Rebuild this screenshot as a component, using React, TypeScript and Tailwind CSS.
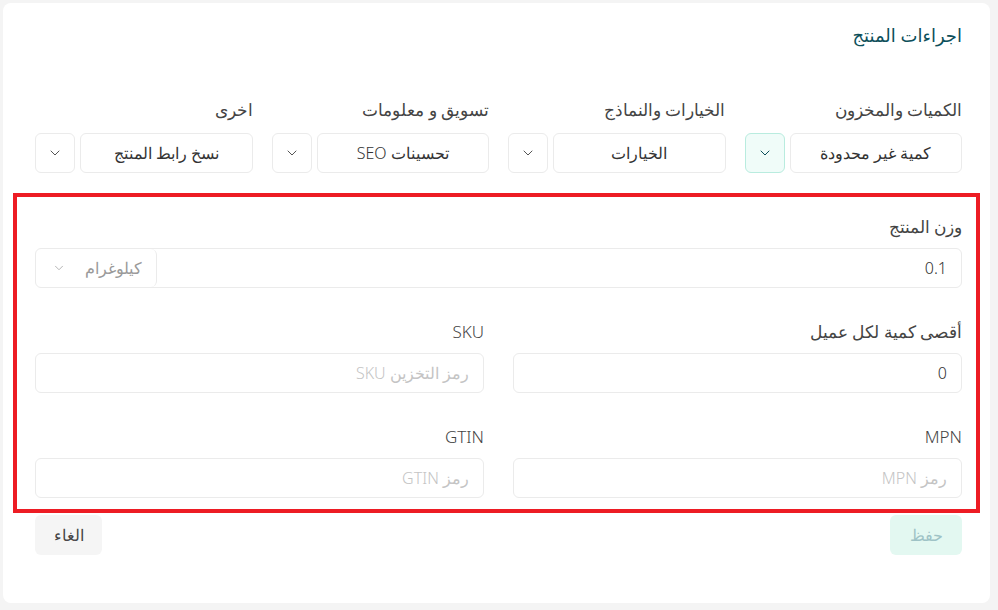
import { ChevronDown } from "lucide-react";

const groups = [
  { label: "الكميات والمخزون", value: "كمية غير محدودة", active: true },
  { label: "الخيارات والنماذج", value: "الخيارات", active: false },
  { label: "تسويق و معلومات", value: "تحسينات SEO", active: false },
  { label: "اخرى", value: "نسخ رابط المنتج", active: false },
];

function Field({ label, value, placeholder }: { label: string; value?: string; placeholder?: string }) {
  return (
    <div className="flex flex-col">
      <label className="h-6 mb-[9px] text-[17px] leading-6 text-[#444]">{label}</label>
      <div className="h-10 border border-[#ebebeb] rounded-md flex items-center px-[14px] text-[16px]">
        {value ? <span className="text-[#333]">{value}</span> : <span className="text-[#c4c4c4]">{placeholder}</span>}
      </div>
    </div>
  );
}

export default function App() {
  return (
    <div dir="rtl" className="bg-[#f4f4f4] h-[610px] pt-[3px] pr-[8px] pl-[3px] font-light font-['Noto_Sans','DejaVu_Sans',sans-serif]">
      <div className="bg-white rounded-lg h-[600px] px-[10px] pt-[20px]">
        <div className="pr-[18px] pl-[22px]">
          <h2 className="h-6 text-[18px] leading-6 font-normal text-[#0d4f5a]">اجراءات المنتج</h2>
          <div className="mt-[51px] grid grid-cols-4 gap-x-[19px]">
            {groups.map((g) => (
              <div key={g.label} className="flex flex-col">
                <span className="h-6 mb-[11px] text-[17px] leading-6 text-[#444]">{g.label}</span>
                <div className="flex gap-[5px] h-10">
                  <div className="flex-1 border border-[#ebebeb] rounded-md flex items-center justify-center text-[16px] text-[#333]">
                    {g.value}
                  </div>
                  <button
                    className={
                      g.active
                        ? "w-10 border border-[#b9ecdf] bg-[#f0fcf9] rounded-md flex items-center justify-center text-[#0d4f5a]"
                        : "w-10 border border-[#ebebeb] rounded-md flex items-center justify-center text-[#555]"
                    }
                  >
                    <ChevronDown size={16} strokeWidth={1.5} />
                  </button>
                </div>
              </div>
            ))}
          </div>
        </div>

        <div className="mt-[20px] border-4 border-[#ed1c24] pt-[18px] pb-[11px] pr-[14px] pl-[18px]">
          <div className="flex flex-col">
            <label className="h-6 mb-[9px] text-[17px] leading-6 text-[#444]">وزن المنتج</label>
            <div className="h-10 border border-[#ebebeb] rounded-md flex items-stretch text-[16px]">
              <div className="flex-1 flex items-center px-[14px] text-[#333]">0.1</div>
              <div className="w-[121px] border-r border-[#ebebeb] rounded-md flex items-center justify-between pr-[14px] pl-[16px] text-[#9a9a9a]">
                <span>كيلوغرام</span>
                <ChevronDown size={14} strokeWidth={1.5} className="text-[#aaa]" />
              </div>
            </div>
          </div>

          <div className="mt-[32px] grid grid-cols-2 gap-x-[29px] gap-y-[32px]">
            <Field label="أقصى كمية لكل عميل" value="0" />
            <Field label="SKU" placeholder="رمز التخزين SKU" />
            <Field label="MPN" placeholder="رمز MPN" />
            <Field label="GTIN" placeholder="رمز GTIN" />
          </div>
        </div>

        <div className="mt-[2px] flex justify-between pr-[18px] pl-[22px]">
          <button className="h-10 w-[72px] rounded-md bg-[#e3f8f1] text-[16px] text-[#9ec3c6]">حفظ</button>
          <button className="h-10 w-[67px] rounded-md bg-[#f5f5f5] text-[16px] text-[#444]">الغاء</button>
        </div>
      </div>
    </div>
  );
}
